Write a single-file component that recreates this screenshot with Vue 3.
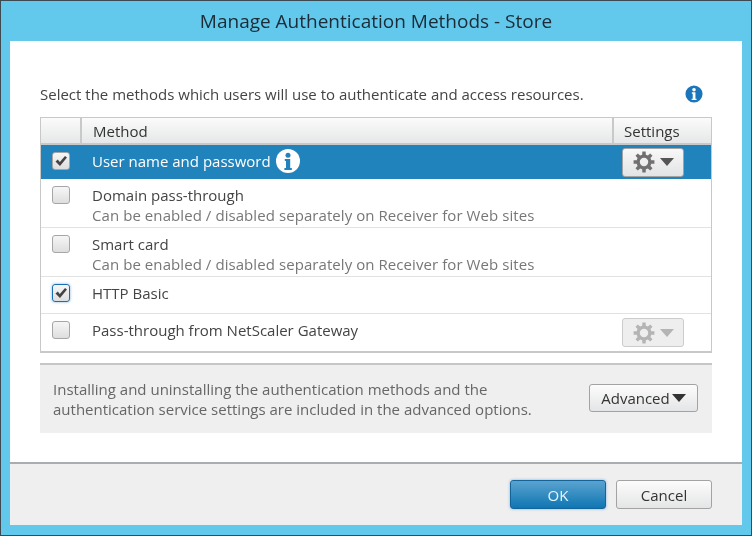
<template>
  <div class="window">
    <div class="title">Manage Authentication Methods - Store</div>

    <div class="content">
      <div class="intro">
        <span>Select the methods which users will use to authenticate and access resources.</span>
        <svg class="info-icon" viewBox="0 0 20 20">
          <circle cx="10" cy="10" r="9.5" fill="#1b75bb" />
          <circle cx="10" cy="5.2" r="2" fill="#fff" />
          <path d="M7.6 8h4v7.2h1.2v1.6H7.4v-1.6h1.2V9.6h-1z" fill="#fff" />
        </svg>
      </div>

      <div class="table">
        <div class="table-head">
          <div class="col-check"></div>
          <div class="col-method">Method</div>
          <div class="col-settings">Settings</div>
        </div>

        <div
          v-for="row in rows"
          :key="row.name"
          class="row"
          :class="{ selected: row.selected }"
          :style="{ height: row.height + 'px' }"
        >
          <div class="col-check">
            <span class="checkbox" :class="{ focused: row.focused }">
              <svg v-if="row.checked" viewBox="0 0 14 14" class="tick">
                <path d="M1.5 7.5 L3.8 5.6 L5.8 8 L11 2 L13 3.6 L6 12 Z" fill="#444" />
              </svg>
            </span>
          </div>
          <div class="method-cell">
            <div class="method-name">
              {{ row.name }}
              <svg v-if="row.selected" class="row-info" viewBox="0 0 24 24">
                <circle cx="12" cy="12" r="12" fill="#fff" />
                <circle cx="12" cy="6.2" r="2.5" fill="#2083bc" />
                <path d="M8.8 10h5.4v9h1.6v2H8.4v-2h1.6v-7H8.8z" fill="#2083bc" />
              </svg>
            </div>
            <div v-if="row.note" class="method-note">{{ row.note }}</div>
          </div>
          <div class="settings-cell">
            <button v-if="row.gear" class="gear-btn" :class="{ disabled: row.gear === 'off' }">
              <svg class="gear" viewBox="-12 -12 24 24">
                <path :d="gearPath" fill-rule="evenodd" />
              </svg>
              <span class="caret"></span>
            </button>
          </div>
        </div>
      </div>

      <div class="advanced-panel">
        <p>Installing and uninstalling the authentication methods and the authentication service settings are included in the advanced options.</p>
        <button class="btn advanced-btn">Advanced<span class="caret dark"></span></button>
      </div>
    </div>

    <div class="footer">
      <button class="btn primary">OK</button>
      <button class="btn">Cancel</button>
    </div>
  </div>
</template>

<script setup>
const note = 'Can be enabled / disabled separately on Receiver for Web sites'

const rows = [
  { name: 'User name and password', checked: true, selected: true, gear: 'on', height: 34 },
  { name: 'Domain pass-through', note, height: 49 },
  { name: 'Smart card', note, height: 49 },
  { name: 'HTTP Basic', checked: true, focused: true, height: 37 },
  { name: 'Pass-through from NetScaler Gateway', gear: 'off', height: 37 }
]

// 8 tooth gear with a hole in the middle
const buildGear = () => {
  const teeth = 8
  const pts = []
  for (let i = 0; i < teeth; i++) {
    const a = (i * Math.PI * 2) / teeth
    const step = Math.PI / teeth
    const corners = [
      [8.2, a - step * 0.62],
      [11.5, a - step * 0.4],
      [11.5, a + step * 0.4],
      [8.2, a + step * 0.62]
    ]
    corners.forEach(([r, t]) => {
      pts.push(`${(r * Math.cos(t)).toFixed(2)} ${(r * Math.sin(t)).toFixed(2)}`)
    })
  }
  const hole = 'M4.6 0a4.6 4.6 0 1 0-9.2 0a4.6 4.6 0 1 0 9.2 0z'
  return `M${pts.join('L')}z${hole}`
}

const gearPath = buildGear()
</script>

<style>
html, body {
  margin: 0;
  background: #fff;
}
</style>

<style scoped>
.window {
  box-sizing: border-box;
  width: 752px;
  height: 536px;
  display: flex;
  flex-direction: column;
  background: #62c8ec;
  border: 1px solid #3d4a52;
  padding: 0 9px 10px;
  font-family: "Open Sans", "Noto Sans", sans-serif;
  font-size: 15px;
  color: #333;
  filter: blur(0.35px);
}

.title {
  height: 40px;
  flex: none;
  line-height: 40px;
  text-align: center;
  font-size: 19px;
  color: #1c2b36;
}

.content {
  flex: 1;
  background: #fff;
  padding: 0 30px;
  display: flex;
  flex-direction: column;
  border-bottom: 2px solid #a9adb0;
}

.intro {
  height: 76px;
  flex: none;
  display: flex;
  justify-content: space-between;
  align-items: center;
  box-sizing: border-box;
  padding: 30px 9px 0 0;
  color: #444;
}

.info-icon {
  width: 18px;
  height: 18px;
}

.table {
  border: 1px solid #c8c8c8;
  border-bottom-width: 2px;
  display: flex;
  flex-direction: column;
}

.table-head {
  height: 25px;
  display: flex;
  background: linear-gradient(#fbfbfb, #e6e7e8);
  border-bottom: 2px solid #c9c9c9;
  line-height: 26px;
  color: #333;
}

.col-check {
  width: 40px;
  height: 32px;
  flex: none;
  display: flex;
  align-items: center;
  justify-content: center;
}

.table-head .col-check {
  border-right: 2px solid #c9c9c9;
  box-sizing: border-box;
  width: 41px;
  height: auto;
}

.col-method {
  flex: 1;
  padding-left: 11px;
}

.col-settings {
  width: 99px;
  box-sizing: border-box;
  border-left: 2px solid #c9c9c9;
  padding-left: 10px;
}

.row {
  display: flex;
  border-bottom: 1px solid #e2e2e2;
  box-sizing: border-box;
  color: #444;
}

.row:last-child {
  border-bottom: none;
}

.row.selected {
  background: #2083bc;
  color: #fff;
  border-bottom: none;
}

.checkbox {
  box-sizing: border-box;
  width: 18px;
  height: 18px;
  border: 1px solid #a6a6a6;
  border-radius: 3px;
  background: linear-gradient(#f6f6f6, #dedede);
  display: flex;
  align-items: center;
  justify-content: center;
}

.checkbox.focused {
  border-color: #1b6eae;
  box-shadow: 0 0 3px #7fb2da;
}

.tick {
  width: 14px;
  height: 14px;
}

.method-cell {
  flex: 1;
  padding: 6px 0 0 11px;
  min-width: 0;
}

.method-name {
  display: flex;
  align-items: center;
  gap: 5px;
  height: 20px;
  line-height: 20px;
}

.method-note {
  line-height: 21px;
  color: #777;
  letter-spacing: 0.07px;
}

.row-info {
  width: 24px;
  height: 24px;
}

.settings-cell {
  width: 99px;
  flex: none;
  box-sizing: border-box;
  padding-left: 10px;
  display: flex;
  align-items: center;
}

.gear-btn {
  box-sizing: border-box;
  width: 62px;
  height: 29px;
  padding: 0;
  display: flex;
  align-items: center;
  justify-content: center;
  gap: 5px;
  background: linear-gradient(#f8f8f8, #e2e3e4);
  border: 1px solid #a3a3a3;
  border-radius: 3px;
}

.gear {
  width: 22px;
  height: 22px;
  fill: #707070;
}

.caret {
  width: 0;
  height: 0;
  border-left: 7.5px solid transparent;
  border-right: 7.5px solid transparent;
  border-top: 8px solid #555;
}

.gear-btn.disabled {
  background: #eeeeee;
  border-color: #cccccc;
}

.gear-btn.disabled .gear {
  fill: #b4b4b4;
}

.gear-btn.disabled .caret {
  border-top-color: #b4b4b4;
}

.advanced-panel {
  height: 70px;
  margin-top: 10px;
  box-sizing: border-box;
  background: #efefef;
  border-top: 2px solid #c4c6c8;
  display: flex;
  align-items: center;
  justify-content: space-between;
  padding: 0 14px 2px 13px;
}

.advanced-panel p {
  margin: 2px 0 0;
  width: 500px;
  line-height: 20px;
  color: #666;
}

.btn {
  box-sizing: border-box;
  width: 96px;
  height: 29px;
  padding: 0;
  font: inherit;
  color: #333;
  background: linear-gradient(#fcfcfc, #e4e5e6);
  border: 1px solid #a3a3a3;
  border-radius: 3px;
}

.advanced-btn {
  width: 109px;
  height: 28px;
  display: flex;
  align-items: center;
  justify-content: center;
  gap: 2px;
}

.caret.dark {
  border-top-color: #333;
}

.footer {
  height: 61px;
  flex: none;
  box-sizing: border-box;
  background: #efefef;
  display: flex;
  align-items: center;
  justify-content: flex-end;
  gap: 10px;
  padding: 0 30px 0 0;
}

.btn.primary {
  color: #e8f4fb;
  background: linear-gradient(#5aa3d0, #0f76b2);
  border-color: #14649c;
  box-shadow: 0 0 3px #7fb2da;
}
</style>
